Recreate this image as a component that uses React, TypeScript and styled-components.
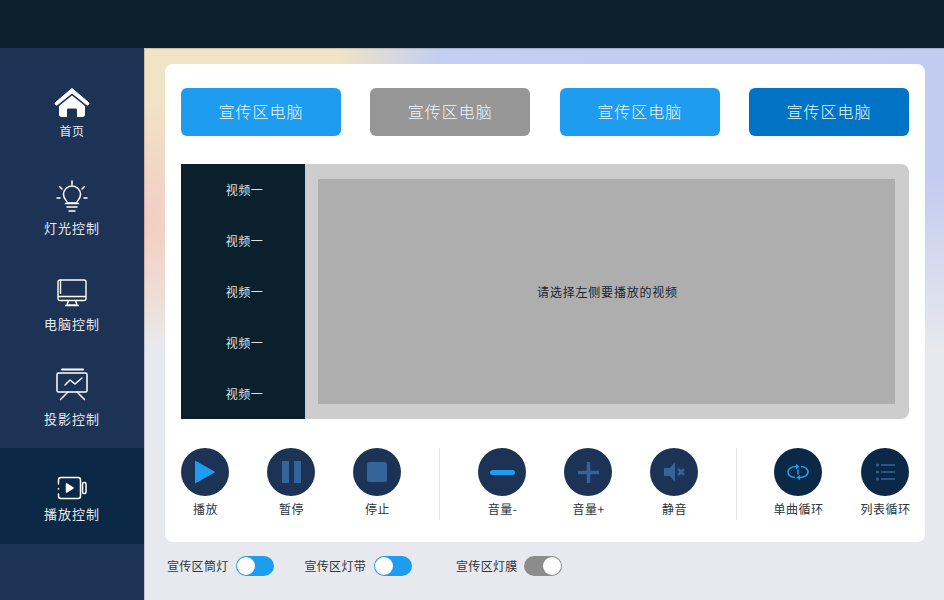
import React from "react";
import styled, { createGlobalStyle } from "styled-components";

const Global = createGlobalStyle`
  html, body { margin: 0; padding: 0; }
  body { font-family: "Noto Sans CJK SC", "Liberation Sans", sans-serif; background: #e8e9ee; }
  * { box-sizing: border-box; }
`;

const Page = styled.div`
  width: 944px;
  height: 600px;
  display: flex;
  flex-direction: column;
  overflow: hidden;
`;
const TopBar = styled.header`
  height: 48px;
  flex: none;
  background: #0b202d;
`;
const Body = styled.div`
  flex: 1;
  display: flex;
  min-height: 0;
`;
const Sidebar = styled.nav`
  width: 144px;
  flex: none;
  padding-top: 16px;
  background: #1c3355;
`;
const NavItem = styled.div<{ $active?: boolean; $pad: number; $gap: number; $small?: boolean }>`
  height: 96px;
  padding-top: ${(p) => p.$pad}px;
  display: flex;
  flex-direction: column;
  align-items: center;
  background: ${(p) => (p.$active ? "#0b2846" : "transparent")};
  color: #e6e9ee;
  font-size: ${(p) => (p.$small ? 12 : 13)}px;
  line-height: 18px;
  letter-spacing: ${(p) => (p.$small ? 0.5 : 1)}px;
  svg { display: block; margin-bottom: ${(p) => p.$gap}px; }
`;
const Main = styled.main`
  flex: 1;
  min-width: 0;
  padding: 16px 19px 0 21px;
  box-shadow: inset 1px 1px 1px rgba(0, 0, 0, 0.18);
  background:
    radial-gradient(ellipse 130px 125px at 0 172px, #f3cdc4 0%, rgba(243, 205, 196, 0) 100%),
    linear-gradient(180deg, rgba(232, 233, 238, 0) 130px, #e8e9ee 305px),
    linear-gradient(90deg, #f0e4c6 0, #f0e4c6 195px, #c4cef1 295px, #c2ccf0 100%);
`;
const Card = styled.section`
  height: 478px;
  padding: 24px 16px 0;
  background: #fff;
  border-radius: 8px;
`;
const ButtonRow = styled.div`
  display: flex;
  justify-content: space-between;
`;
const PcButton = styled.div<{ $bg: string }>`
  width: 160px;
  height: 48px;
  padding-bottom: 2px;
  border-radius: 6px;
  background: ${(p) => p.$bg};
  color: #eef5fb;
  font-size: 16px;
  font-weight: 300;
  letter-spacing: 1px;
  display: flex;
  align-items: center;
  justify-content: center;
`;
const VideoPanel = styled.div`
  margin-top: 28px;
  height: 255px;
  display: flex;
  background: #cdcdcd;
  border-radius: 0 8px 8px 0;
  overflow: hidden;
`;
const VideoList = styled.ul`
  width: 124px;
  flex: none;
  margin: 0;
  padding: 0;
  list-style: none;
  background: #0b202d;
`;
const VideoItem = styled.li`
  height: 51px;
  padding-left: 3px;
  display: flex;
  align-items: center;
  justify-content: center;
  color: #dde1e3;
  font-size: 12px;
  letter-spacing: 0.5px;
`;
const Screen = styled.div`
  flex: none;
  width: 577px;
  height: 225px;
  padding-left: 2px;
  margin: 15px 0 0 13px;
  background: #aeaeae;
  color: #1a252c;
  font-size: 12px;
  letter-spacing: 0.8px;
  display: flex;
  align-items: center;
  justify-content: center;
`;
const Controls = styled.div`
  margin-top: 29px;
  display: flex;
`;
const Group = styled.div<{ $w: number; $gap: number }>`
  width: ${(p) => p.$w}px;
  flex: none;
  display: flex;
  gap: ${(p) => p.$gap}px;
`;
const Divider = styled.div<{ $after: number }>`
  width: 1px;
  height: 72px;
  flex: none;
  background: #e6e6e6;
  margin-right: ${(p) => p.$after}px;
`;
const Control = styled.div`
  width: 48px;
  flex: none;
  display: flex;
  flex-direction: column;
  align-items: center;
  color: #2a343c;
  font-size: 12px;
  line-height: 18px;
  letter-spacing: 0.5px;
  white-space: nowrap;
`;
const Caption = styled.span`
  padding-left: 1px;
`;
const Round = styled.div<{ $bg?: string }>`
  width: 48px;
  height: 48px;
  border-radius: 50%;
  background: ${(p) => p.$bg ?? "#1c3355"};
  display: flex;
  align-items: center;
  justify-content: center;
  margin-bottom: 4px;
`;
const Footer = styled.div`
  height: 48px;
  padding-left: 2px;
  display: flex;
  align-items: center;
`;
const ToggleLabel = styled.span<{ $left: number }>`
  margin-left: ${(p) => p.$left}px;
  padding-bottom: 2px;
  color: #2a343c;
  font-size: 12px;
  letter-spacing: 0.3px;
  white-space: nowrap;
`;
const Toggle = styled.div<{ $on: boolean; $left: number }>`
  width: 38px;
  height: 20px;
  margin-left: ${(p) => p.$left}px;
  flex: none;
  border-radius: 10px;
  padding: 1px;
  display: flex;
  justify-content: ${(p) => (p.$on ? "flex-start" : "flex-end")};
  background: ${(p) => (p.$on ? "#1e9cf0" : "#8c8c8c")};
`;
const Knob = styled.div`
  width: 18px;
  height: 18px;
  border-radius: 50%;
  background: #fff;
`;

const HomeIcon = () => (
  <svg width="36" height="30" viewBox="0 0 36 30">
    <path d="M18 .5 1.500 14.500c-1.300 1.200.4 3.300 1.900 2.200L18 5l14.600 11.700c1.500 1.100 3.200-1 1.900-2.200Z" fill="#fff" stroke="#fff" strokeLinejoin="round" />
    <path d="M18 7.500 5 18v8.500c0 1.400 1 2.500 2.500 2.500H13v-7c0-1 .8-1.500 1.500-1.500h7c.8 0 1.500.6 1.500 1.500v7h5.500c1.500 0 2.500-1.100 2.500-2.500V18Z" fill="#fff" />
  </svg>
);
const BulbIcon = () => (
  <svg width="32" height="34" viewBox="0 0 32 34" fill="none" stroke="#fff" strokeWidth="1.500" strokeLinecap="round">
    <path d="M16 1v3.500M3.500 6.500 6 9M28.500 6.500 26 9M1 18h3M28 18h3" />
    <path d="M11.500 23c-.3-2-4-4-4-8.500a8.500 8.500 0 0 1 17 0c0 4.500-3.700 6.500-4 8.500Z" />
    <path d="M9.500 23.500h13M11 27h10M13 31h6" />
  </svg>
);
const MonitorIcon = () => (
  <svg width="30" height="28" viewBox="0 0 30 28" fill="none" stroke="#fff" strokeWidth="1.400" strokeLinejoin="round">
    <rect x="1" y="1" width="28" height="20.500" rx="2" />
    <path d="M1 17.500h28M3.500 1v14" />
    <path d="M11.500 21.500 10 26h10l-1.500-4.500M8 26.500h14" />
  </svg>
);
const ProjectorIcon = () => (
  <svg width="32" height="34" viewBox="0 0 32 34" fill="none" stroke="#fff" strokeWidth="1.500" strokeLinecap="round" strokeLinejoin="round">
    <path d="M6 1.500h21" strokeWidth="2" />
    <rect x="1" y="5" width="30" height="19" rx="1.500" />
    <path d="M9 17 14 12l5 4 7-6" />
    <path d="M12 24 4.500 31.500M21 24l7.500 7.500" />
  </svg>
);
const VideoIcon = () => (
  <svg width="30" height="24" viewBox="0 0 30 24" fill="none" stroke="#fff" strokeWidth="1.500" strokeLinejoin="round" strokeLinecap="round">
    <path d="M1.500 8V4c0-1.500 1-2.500 2.500-2.500h17c1.500 0 2.500 1 2.500 2.500v16c0 1.500-1 2.500-2.500 2.500H4c-1.500 0-2.500-1-2.500-2.500v-2M1.500 12.500v.5" />
    <rect x="25.500" y="6.500" width="3.500" height="11" rx="1.500" />
    <path d="M9.500 8v8l6.500-4Z" fill="#fff" />
  </svg>
);

const navItems = [
  { label: "首页", pad: 24, gap: 4, small: true, icon: <HomeIcon /> },
  { label: "灯光控制", pad: 20, gap: 5, icon: <BulbIcon /> },
  { label: "电脑控制", pad: 23, gap: 8, icon: <MonitorIcon /> },
  { label: "投影控制", pad: 16, gap: 8, icon: <ProjectorIcon /> },
  { label: "播放控制", pad: 28, gap: 5, icon: <VideoIcon />, active: true },
];

const blue = "#1e9cf0";
const steel = "#33659a";

export default function App() {
  return (
    <Page>
      <Global />
      <TopBar />
      <Body>
        <Sidebar>
          {navItems.map((n) => (
            <NavItem key={n.label} $active={n.active} $pad={n.pad} $gap={n.gap} $small={n.small}>
              {n.icon}
              {n.label}
            </NavItem>
          ))}
        </Sidebar>
        <Main>
          <Card>
            <ButtonRow>
              <PcButton $bg="#1e9cf0">宣传区电脑</PcButton>
              <PcButton $bg="#969696">宣传区电脑</PcButton>
              <PcButton $bg="#1e9cf0">宣传区电脑</PcButton>
              <PcButton $bg="#0073c4">宣传区电脑</PcButton>
            </ButtonRow>
            <VideoPanel>
              <VideoList>
                {[0, 1, 2, 3, 4].map((i) => (
                  <VideoItem key={i}>视频一</VideoItem>
                ))}
              </VideoList>
              <Screen>请选择左侧要播放的视频</Screen>
            </VideoPanel>
            <Controls>
              <Group $w={258} $gap={38}>
                <Control>
                  <Round>
                    <svg width="22" height="24" viewBox="0 0 22 24"><path d="M1 1.500v21c0 .6.500.9 1 .6l18.500-10.500c.5-.3.500-.9 0-1.200L2 .9c-.5-.3-1 0-1 .6Z" fill={blue} /></svg>
                  </Round>
                  <Caption>播放</Caption>
                </Control>
                <Control>
                  <Round>
                    <svg width="19" height="24" viewBox="0 0 19 24"><path d="M0 1h7v22H0zM12 1h7v22h-7z" fill={steel} /></svg>
                  </Round>
                  <Caption>暂停</Caption>
                </Control>
                <Control>
                  <Round>
                    <svg width="20" height="20" viewBox="0 0 20 20"><rect width="20" height="20" rx="2.500" fill={steel} /></svg>
                  </Round>
                  <Caption>停止</Caption>
                </Control>
              </Group>
              <Divider $after={38} />
              <Group $w={258} $gap={38}>
                <Control>
                  <Round>
                    <svg width="25" height="5" viewBox="0 0 25 5"><rect width="25" height="5" rx="2.500" fill={blue} /></svg>
                  </Round>
                  <Caption>音量-</Caption>
                </Control>
                <Control>
                  <Round>
                    <svg width="21" height="21" viewBox="0 0 21 21"><path d="M8.750 0h3.500v8.750H21v3.500h-8.750V21h-3.500v-8.750H0v-3.500h8.750Z" fill={steel} /></svg>
                  </Round>
                  <Caption>音量+</Caption>
                </Control>
                <Control>
                  <Round>
                    <svg width="22" height="20" viewBox="0 0 22 20"><path d="M1 6h5.500L12 .5v19L6.500 14H1Z" fill={steel} /><path d="m15 7 6 6M21 7l-6 6" stroke={steel} strokeWidth="2.500" /></svg>
                  </Round>
                  <Caption>静音</Caption>
                </Control>
              </Group>
              <Divider $after={37} />
              <Group $w={135} $gap={39}>
                <Control>
                  <Round $bg="#0b2846">
                    <svg width="22" height="18" viewBox="0 0 22 18" fill="none" stroke={blue} strokeWidth="1.600"><path d="M9 3.500C4.500 3.500 1 5.800 1 9s3 5.500 7 5.500" /><path d="m9 .8 3.500 2.700L9 6.200Z" fill={blue} stroke="none" /><path d="M13 14.500c4.500 0 8-2.300 8-5.500s-3-5.500-7-5.500" /><path d="m13 11.800-3.500 2.700 3.500 2.700Z" fill={blue} stroke="none" /><path d="M11 6.500v5" /></svg>
                  </Round>
                  <Caption>单曲循环</Caption>
                </Control>
                <Control>
                  <Round $bg="#0b2846">
                    <svg width="19" height="18" viewBox="0 0 19 18"><circle cx="1.500" cy="2" r="1.500" fill={steel} /><circle cx="1.500" cy="9" r="1.500" fill={steel} /><circle cx="1.500" cy="16" r="1.500" fill={steel} /><path d="M5 2h14M5 9h14M5 16h14" stroke={steel} strokeWidth="1.400" /></svg>
                  </Round>
                  <Caption>列表循环</Caption>
                </Control>
              </Group>
            </Controls>
          </Card>
          <Footer>
            <ToggleLabel $left={0}>宣传区筒灯</ToggleLabel>
            <Toggle $on $left={7}><Knob /></Toggle>
            <ToggleLabel $left={31}>宣传区灯带</ToggleLabel>
            <Toggle $on $left={8}><Knob /></Toggle>
            <ToggleLabel $left={44}>宣传区灯膜</ToggleLabel>
            <Toggle $on={false} $left={6}><Knob /></Toggle>
          </Footer>
        </Main>
      </Body>
    </Page>
  );
}
